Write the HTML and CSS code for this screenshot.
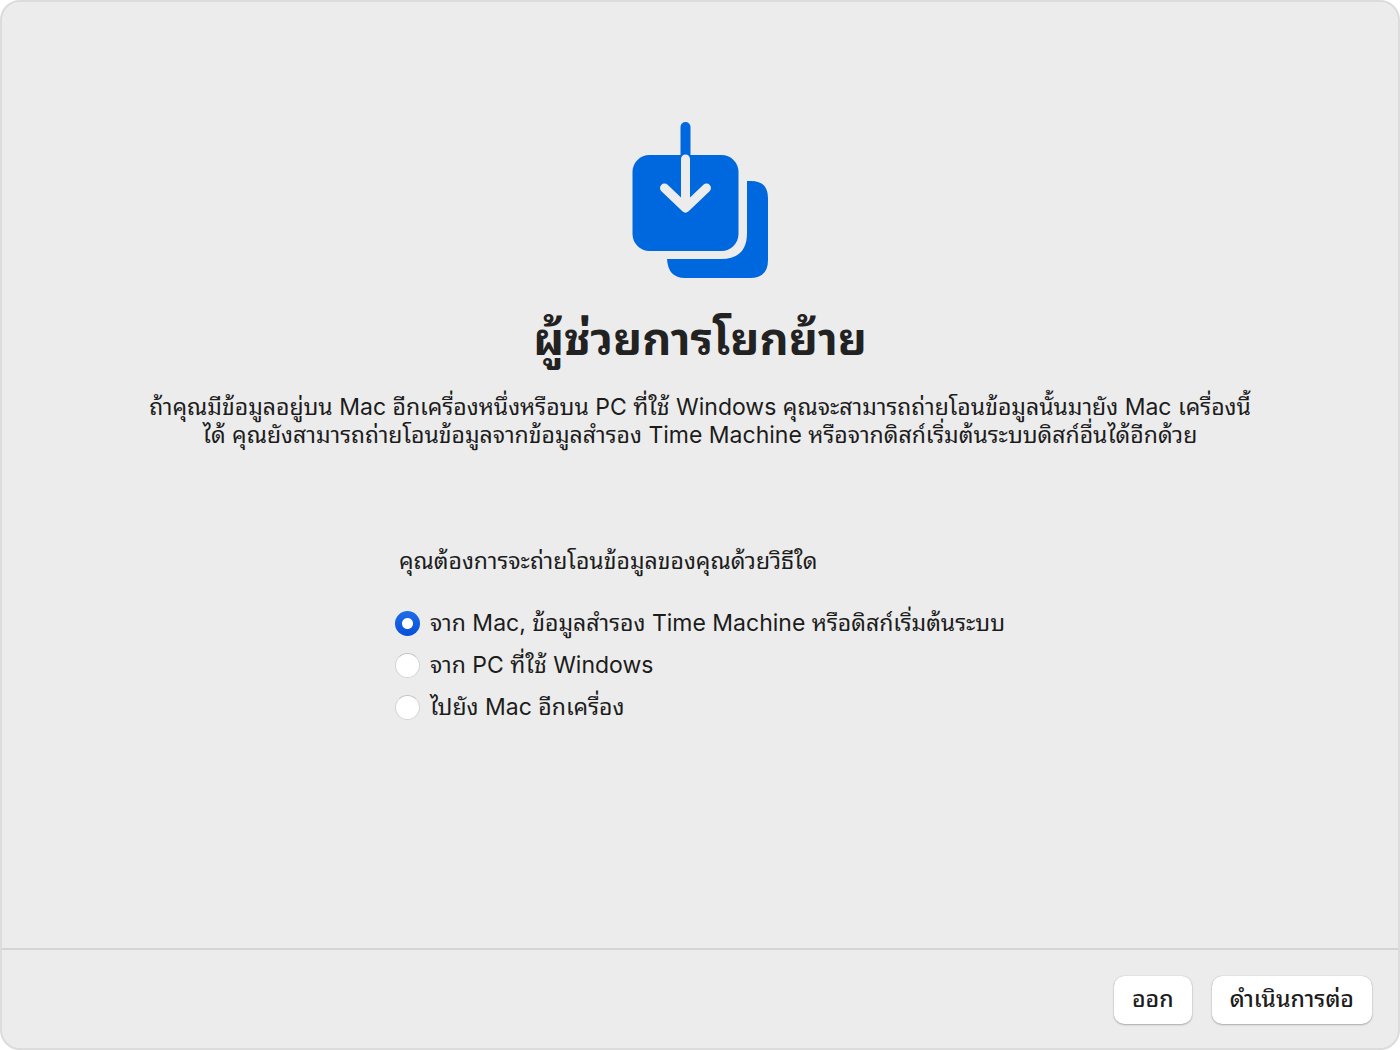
FILE: index.html
```
<!DOCTYPE html>
<html lang="th">
<head>
<meta charset="utf-8">
<title>ผู้ช่วยการโยกย้าย</title>
<link rel="stylesheet" href="styles.css">
</head>

<body>
<form class="window">
	<main class="content">
		<svg class="logo" viewBox="0 0 138 158" aria-hidden="true">
			<path class="blue" d="M116 60h4q17 0 17 17v62q0 18-18 18H54q-17 0-18-19h54q26 0 26-26z"/>
			<rect class="blue" x="1.5" y="34" width="106" height="96" rx="17"/>
			<path class="stem" d="M54.5 6v29"/>
			<path class="arrow" d="M54.5 38v47M33.5 67l21 20 21-20"/>
		</svg>
		<h1>ผู้ช่วยการโยกย้าย</h1>
		<p class="intro">ถ้าคุณมีข้อมูลอยู่บน Mac อีกเครื่องหนึ่งหรือบน PC ที่ใช้ Windows คุณจะสามารถถ่ายโอนข้อมูลนั้นมายัง Mac เครื่องนี้<br>ได้ คุณยังสามารถถ่ายโอนข้อมูลจากข้อมูลสำรอง Time Machine หรือจากดิสก์เริ่มต้นระบบดิสก์อื่นได้อีกด้วย</p>
		<fieldset class="options">
			<legend>คุณต้องการจะถ่ายโอนข้อมูลของคุณด้วยวิธีใด</legend>
			<label><input type="radio" name="source" checked>จาก Mac, ข้อมูลสำรอง Time Machine หรือดิสก์เริ่มต้นระบบ</label>
			<label><input type="radio" name="source">จาก PC ที่ใช้ Windows</label>
			<label><input type="radio" name="source">ไปยัง Mac อีกเครื่อง</label>
		</fieldset>
	</main>
	<footer class="bar">
		<button type="button">ออก</button>
		<button type="submit">ดำเนินการต่อ</button>
	</footer>
</form>
</body>
</html>
```
FILE: styles.css
```
*{margin:0; padding:0; box-sizing:border-box;}
body{background:#fff; color:#1c1c1c; font-family:Inter,"Noto Sans Thai Looped","Noto Looped Thai",Loma,Waree,"Noto Sans Thai",sans-serif; font-size:23px; line-height:28px;}
.window{display:flex; flex-direction:column; min-height:100vh; background:#ececec; border:2px solid #dcdcdc; border-radius:20px; overflow:hidden;}
.content{flex:1; display:flex; flex-direction:column; align-items:center; padding:119px 24px 24px;}
.logo{width:138px; height:158px;}
.blue{fill:#0068de;}
.stem{stroke:#0068de; stroke-width:10; stroke-linecap:round;}
.arrow{fill:none; stroke:#ececec; stroke-width:9; stroke-linecap:round; stroke-linejoin:round;}
h1{margin-top:24px; color:#222; font-size:45px; line-height:72px; font-weight:700;}
.intro{margin-top:18px; text-align:center;}
.options{width:610px; margin-top:98px; border:0; white-space:nowrap;}
.options legend{padding-left:4px; margin-bottom:27px;}
.options label{display:flex; align-items:center; gap:10px; height:42px;}
.options input{appearance:none; flex:none; width:25px; height:25px; border-radius:50%; background:#fff; border:1px solid #d4d4d4; border-top-color:#c4c4c4;}
.options input:checked{background:radial-gradient(circle,#fff 5px,transparent 6px),linear-gradient(#1f6ce6,#0650dc); border:0;}
.bar{display:flex; justify-content:flex-end; gap:20px; padding:26px 26px 24px; border-top:2px solid #d4d4d4;}
.bar button{height:48px; padding:0 18px 2px; border:0; border-radius:10px; background:#fff; color:#1c1c1c; font:inherit; font-weight:500; box-shadow:0 0 1px rgba(0,0,0,.3),0 1px 2px rgba(0,0,0,.25);}
```
